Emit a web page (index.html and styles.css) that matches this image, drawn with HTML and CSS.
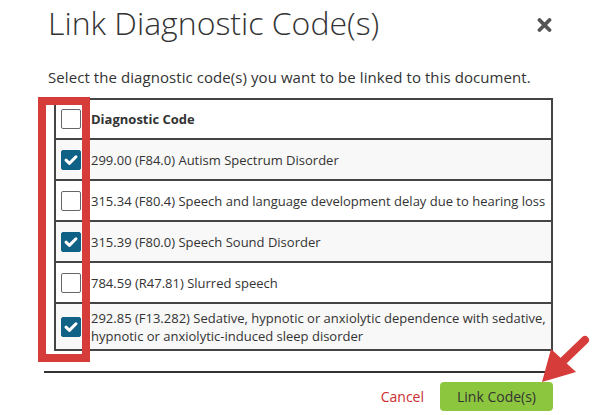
FILE: index.html
```html
<!DOCTYPE html>
<html lang="en">
<head>
<meta charset="utf-8">
<title>Link Diagnostic Code(s)</title>
<link rel="stylesheet" href="styles.css">
</head>
<body>
<div class="modal">
  <header class="modal-head">
    <h1 class="title">Link Diagnostic Code(s)</h1>
    <button class="close" aria-label="Close">
      <svg width="15" height="14" viewBox="0 0 15 14"><path d="M2.5 2 L12.5 12 M12.5 2 L2.5 12" stroke="#555" stroke-width="3.8" stroke-linecap="round"/></svg>
    </button>
  </header>
  <p class="intro">Select the diagnostic code(s) you want to be linked to this document.</p>
  <table class="codes">
    <tr class="head-row">
      <td class="cb-cell"><span class="cb"></span></td>
      <th class="label">Diagnostic Code</th>
    </tr>
    <tr class="alt">
      <td class="cb-cell"><span class="cb on"><svg width="20" height="20" viewBox="0 0 20 20"><path d="M5 10.2 L8.4 13.4 L15 6.8" fill="none" stroke="#fff" stroke-width="3" stroke-linecap="round" stroke-linejoin="round"/></svg></span></td>
      <td class="label">299.00 (F84.0) Autism Spectrum Disorder</td>
    </tr>
    <tr>
      <td class="cb-cell"><span class="cb"></span></td>
      <td class="label">315.34 (F80.4) Speech and language development delay due to hearing loss</td>
    </tr>
    <tr class="alt">
      <td class="cb-cell"><span class="cb on"><svg width="20" height="20" viewBox="0 0 20 20"><path d="M5 10.2 L8.4 13.4 L15 6.8" fill="none" stroke="#fff" stroke-width="3" stroke-linecap="round" stroke-linejoin="round"/></svg></span></td>
      <td class="label">315.39 (F80.0) Speech Sound Disorder</td>
    </tr>
    <tr>
      <td class="cb-cell"><span class="cb"></span></td>
      <td class="label">784.59 (R47.81) Slurred speech</td>
    </tr>
    <tr class="alt last">
      <td class="cb-cell"><span class="cb on"><svg width="20" height="20" viewBox="0 0 20 20"><path d="M5 10.2 L8.4 13.4 L15 6.8" fill="none" stroke="#fff" stroke-width="3" stroke-linecap="round" stroke-linejoin="round"/></svg></span></td>
      <td class="label">292.85 (F13.282) Sedative, hypnotic or anxiolytic dependence with sedative, hypnotic or anxiolytic-induced sleep disorder</td>
    </tr>
  </table>
  <footer class="modal-foot">
    <button class="cancel">Cancel</button>
    <button class="primary">Link Code(s)</button>
  </footer>
  <div class="highlight-box"></div>
  <svg class="pointer-arrow" width="72" height="60" viewBox="0 0 72 60">
    <line x1="55" y1="10" x2="28" y2="36" stroke="#d63c3a" stroke-width="8" stroke-linecap="round"/>
    <polygon points="21,19 46,42 12,52" fill="#d63c3a"/>
  </svg>
</div>
</body>
</html>
```
FILE: styles.css
```css
* { box-sizing: border-box; }
html, body {
  margin: 0;
  padding: 0;
  background: #fff;
}
body {
  font-family: "Open Sans", "Noto Sans", sans-serif;
  color: #333;
  width: 602px;
  height: 415px;
  overflow: hidden;
}
.modal {
  position: relative;
  width: 602px;
  height: 415px;
  padding: 0 49px 0 44px;
}
.modal-head {
  display: flex;
  align-items: flex-start;
  justify-content: space-between;
  padding: 3px 0 0 4px;
}
.title {
  margin: 0;
  font-size: 32px;
  font-weight: 300;
  line-height: 40px;
  color: #333;
}
.close {
  margin: 15px 1px 0 0;
  padding: 0;
  border: 0;
  background: none;
  width: 15px;
  height: 14px;
  display: block;
}
.close svg { display: block; }
.intro {
  margin: 24px 0 0 4px;
  font-size: 15px;
  letter-spacing: 0.07px;
  line-height: 20px;
  color: #333;
}
.codes {
  margin: 11px 0 0 10px;
  width: 499px;
  border-collapse: collapse;
  border: 2px solid #444;
}
.codes td, .codes th {
  border-top: 2px solid #444;
  padding: 0;
  font-size: 13px;
  line-height: 18px;
  text-align: left;
  vertical-align: middle;
}
.codes tr { height: 41px; }
.codes tr.head-row { height: 40px; }
.codes tr.last { height: 47px; }
.codes tr.alt { background: #f8f8f8; }
.cb-cell {
  width: 29px;
  border-right: 2px solid #444;
  padding: 0 0 0 5px !important;
}
.label {
  padding: 0 4px 0 6px !important;
  font-weight: 400;
}
th.label { font-weight: 700; }
.cb {
  display: block;
  width: 20px;
  height: 20px;
  border: 1px solid #666;
  border-radius: 2px;
  background: #fff;
}
.cb.on {
  background: #0f6186;
  border-color: #0f6186;
}
.cb.on svg { display: block; margin: -1px; }
.modal-foot {
  margin-top: 20px;
  border-top: 2px solid #333;
  display: flex;
  justify-content: flex-end;
  align-items: center;
  gap: 16px;
  padding-top: 9px;
}
.cancel {
  border: 0;
  background: none;
  padding: 0;
  font-family: inherit;
  font-size: 14px;
  color: #cc2e2e;
}
.primary {
  border: 0;
  background: #8cc63f;
  border-radius: 4px;
  width: 113px;
  height: 29px;
  font-family: inherit;
  font-size: 14px;
  color: #333;
  padding: 0;
}
.highlight-box {
  position: absolute;
  left: 38px;
  top: 97px;
  width: 52px;
  height: 265px;
  border: 8px solid #d63c3a;
}
.pointer-arrow {
  position: absolute;
  left: 530px;
  top: 330px;
}
```
